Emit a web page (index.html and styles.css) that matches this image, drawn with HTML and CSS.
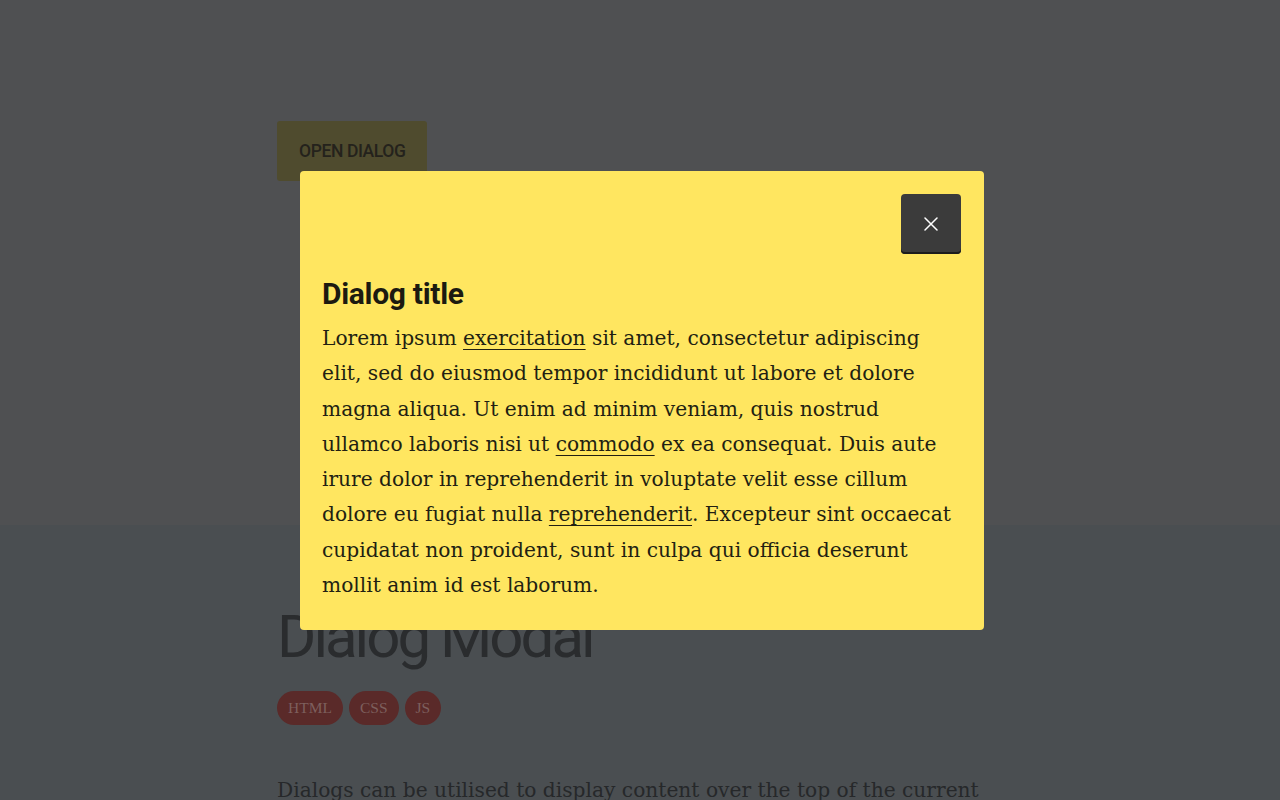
FILE: index.html
```html
<!DOCTYPE html>
<html lang="en">
<head>
<meta charset="utf-8">
<title>Dialog Modal</title>
<link rel="stylesheet" href="styles.css">
</head>
<body>
<header class="hero">
  <div class="container">
    <button class="open-btn" type="button">OPEN DIALOG</button>
  </div>
</header>
<main class="content">
  <div class="container">
    <h1 class="page-title">Dialog Modal</h1>
    <ul class="tags">
      <li class="tag">HTML</li>
      <li class="tag">CSS</li>
      <li class="tag">JS</li>
    </ul>
    <p class="intro">Dialogs can be utilised to display content over the top of the current page.</p>
  </div>
</main>
<div class="dialog" role="dialog" aria-labelledby="dlg-title">
  <div class="dialog-top">
    <button class="close-btn" type="button" aria-label="Close">
      <svg width="14" height="14" viewBox="0 0 14 14" aria-hidden="true"><path d="M1 1L13 13M13 1L1 13" stroke="#fff" stroke-width="1.5" stroke-linecap="round"/></svg>
    </button>
  </div>
  <h2 class="dialog-title" id="dlg-title">Dialog title</h2>
  <p class="dialog-text">Lorem ipsum <a href="#">exercitation</a> sit amet, consectetur adipiscing elit, sed do eiusmod tempor incididunt ut labore et dolore magna aliqua. Ut enim ad minim veniam, quis nostrud ullamco laboris nisi ut <a href="#">commodo</a> ex ea consequat. Duis aute irure dolor in reprehenderit in voluptate velit esse cillum dolore eu fugiat nulla <a href="#">reprehenderit</a>. Excepteur sint occaecat cupidatat non proident, sunt in culpa qui officia deserunt mollit anim id est laborum.</p>
</div>
</body>
</html>
```
FILE: styles.css
```css
* { box-sizing: border-box; }
html, body { margin: 0; padding: 0; }
body {
  background: #4a4e51;
  font-family: "DejaVu Serif", serif;
  overflow: hidden;
  height: 800px;
}
.container {
  width: 726px;
  margin: 0 auto;
}
.hero {
  background: #4f5052;
  height: 525px;
  padding-top: 121px;
}
.open-btn {
  display: block;
  width: 150px;
  height: 60px;
  border: 0;
  border-radius: 3px;
  background: #4f4b2e;
  color: #24221c;
  font-family: "Roboto", sans-serif;
  font-size: 17.5px;
  font-weight: 500;
  letter-spacing: -0.4px;
  white-space: nowrap;
  text-align: left;
  padding: 0 22px;
}
.content { padding-top: 81px; }
.page-title {
  margin: 0;
  font-family: "Roboto", sans-serif;
  font-weight: 400;
  font-size: 60px;
  line-height: 62px;
  letter-spacing: -3px;
  color: #2a2c2e;
}
.tags {
  list-style: none;
  margin: 23px 0 0;
  padding: 0;
  display: flex;
  gap: 6px;
}
.tag {
  height: 34px;
  padding: 0 11px;
  border-radius: 17px;
  background: #5a2a29;
  color: #7d5f5d;
  font-family: "Liberation Serif", serif;
  font-size: 15.5px;
  line-height: 34px;
}
.intro {
  margin: 48px 0 0;
  max-width: 705px;
  font-size: 20.2px;
  line-height: 34px;
  color: #26282a;
}
.dialog {
  position: fixed;
  left: 300px;
  top: 171px;
  width: 684px;
  background: #ffe660;
  border-radius: 4px;
  padding: 23px 23px 27px 22px;
  color: #221f12;
}
.dialog-top {
  display: flex;
  justify-content: flex-end;
}
.close-btn {
  width: 60px;
  height: 60px;
  border: 0;
  border-radius: 4px;
  background: #3b3b3b;
  box-shadow: inset 0 -2px 0 #1c1c1c;
  display: flex;
  align-items: center;
  justify-content: center;
  padding: 0;
}
.dialog-title {
  margin: 20px 0 0;
  font-family: "Roboto", sans-serif;
  font-weight: 700;
  font-size: 30px;
  line-height: 40px;
  letter-spacing: -0.3px;
  color: #1c1a10;
}
.dialog-text {
  margin: 7px 0 0;
  font-size: 20.2px;
  line-height: 35.3px;
}
.dialog-text a {
  color: inherit;
  text-decoration: underline;
  text-decoration-thickness: 1px;
  text-underline-offset: 4px;
}
```
